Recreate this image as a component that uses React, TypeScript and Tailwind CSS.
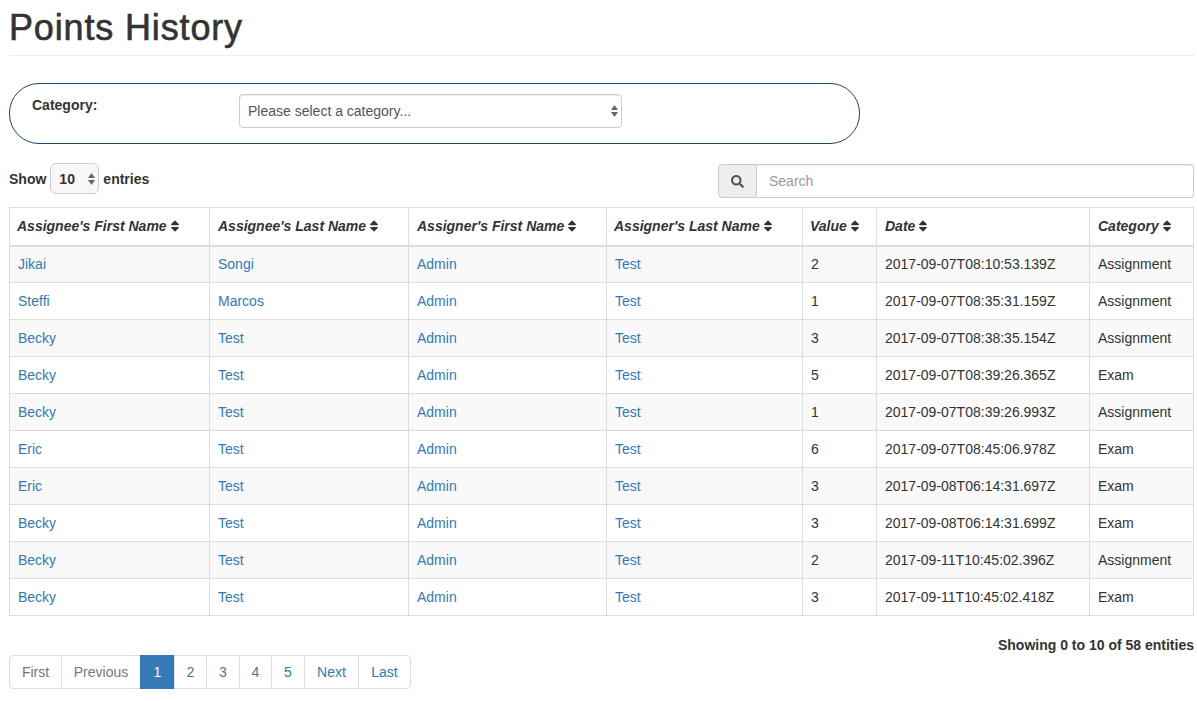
import { FaSearch, FaSort } from 'react-icons/fa'

const rows = [
  ['Jikai', 'Songi', '2', '2017-09-07T08:10:53.139Z', 'Assignment'],
  ['Steffi', 'Marcos', '1', '2017-09-07T08:35:31.159Z', 'Assignment'],
  ['Becky', 'Test', '3', '2017-09-07T08:38:35.154Z', 'Assignment'],
  ['Becky', 'Test', '5', '2017-09-07T08:39:26.365Z', 'Exam'],
  ['Becky', 'Test', '1', '2017-09-07T08:39:26.993Z', 'Assignment'],
  ['Eric', 'Test', '6', '2017-09-07T08:45:06.978Z', 'Exam'],
  ['Eric', 'Test', '3', '2017-09-08T06:14:31.697Z', 'Exam'],
  ['Becky', 'Test', '3', '2017-09-08T06:14:31.699Z', 'Exam'],
  ['Becky', 'Test', '2', '2017-09-11T10:45:02.396Z', 'Assignment'],
  ['Becky', 'Test', '3', '2017-09-11T10:45:02.418Z', 'Exam'],
]

const columns = [
  { label: "Assignee's First Name", width: 'w-[200px]', pad: 'pl-[7px]' },
  { label: "Assignee's Last Name", width: 'w-[199px]', pad: 'pl-2' },
  { label: "Assigner's First Name", width: 'w-[198px]', pad: 'pl-2' },
  { label: "Assigner's Last Name", width: 'w-[196px]', pad: 'pl-[7px]' },
  { label: 'Value', width: 'w-[74px]', pad: 'pl-[7px]' },
  { label: 'Date', width: 'w-[213px]', pad: 'pl-2' },
  { label: 'Category', width: 'w-[104px]', pad: 'pl-2' },
]

const pages = [
  { label: 'First', width: 'w-[53px]', text: 'text-[#777]' },
  { label: 'Previous', width: 'w-[80px]', text: 'text-[#777]' },
  { label: '1', width: 'w-[35px]', text: 'text-white', active: true },
  { label: '2', width: 'w-[33px]', text: 'text-[#337ab7]' },
  { label: '3', width: 'w-[34px]', text: 'text-[#337ab7]' },
  { label: '4', width: 'w-[33px]', text: 'text-[#337ab7]' },
  { label: '5', width: 'w-[34px]', text: 'text-[#337ab7]' },
  { label: 'Next', width: 'w-[55px]', text: 'text-[#337ab7]' },
  { label: 'Last', width: 'w-[53px]', text: 'text-[#337ab7]' },
]

function Arrows() {
  return (
    <svg width="7" height="12" viewBox="0 0 7 12" className="fill-[#666]">
      <path d="M3.5 0 7 5H0z" />
      <path d="M3.5 12 0 7h7z" />
    </svg>
  )
}

function Link({ children }: { children: string }) {
  return <a className="text-[#337ab7]">{children}</a>
}

export default function App() {
  return (
    <div className="w-[1197px] h-[701px] overflow-hidden bg-white pl-[9px] pr-[3px] font-['Liberation_Sans',Arial,sans-serif] text-sm text-[#333]">
      <h1 className="h-[56px] border-b border-[#eee] pt-2 text-4xl leading-[40px] font-normal tracking-[0.85px] [-webkit-text-stroke:0.6px_#333]">
        Points History
      </h1>

      {/* Category filter */}
      <div className="mt-[27px] flex h-[61px] w-[851px] items-start rounded-[30px] border border-[#1f4568] pl-[22px] pt-[10px]">
        <label className="w-[207px] pt-px font-bold leading-5">Category:</label>
        <div className="flex h-[34px] w-[383px] items-center justify-between rounded border border-[#ccc] pl-2 pr-[3px] text-[#555] shadow-[inset_0_1px_1px_rgba(0,0,0,0.075)]">
          <span>Please select a category...</span>
          <Arrows />
        </div>
      </div>

      <div className="mt-[19px] flex items-start justify-between">
        <div className="flex h-[31px] items-center gap-1 font-bold">
          <span>Show</span>
          <div className="flex h-[31px] w-[49px] items-center justify-between rounded-md border border-[#ccc] bg-[#f8f8f8] pl-[8px] pr-[3px]">
            <span>10</span>
            <Arrows />
          </div>
          <span>entries</span>
        </div>
        <div className="mt-px flex h-[34px] w-[476px]">
          <span className="flex w-[39px] items-center justify-center rounded-l border border-[#ccc] bg-[#eee] text-[#555]">
            <FaSearch size={13} />
          </span>
          <input
            placeholder="Search"
            className="min-w-0 flex-1 rounded-r border border-l-0 border-[#ccc] px-3 shadow-[inset_0_1px_1px_rgba(0,0,0,0.075)] outline-none placeholder:text-[#999]"
          />
        </div>
      </div>

      <table className="mt-[9px] w-[1184px] table-fixed border-collapse">
        <thead>
          <tr className="h-[38px]">
            {columns.map((col) => (
              <th
                key={col.label}
                className={`${col.width} ${col.pad} border border-b-2 border-[#ddd] pr-2 text-left font-bold italic text-[#333]`}
              >
                <span className="inline-flex items-center gap-px whitespace-nowrap">
                  {col.label}
                  <FaSort size={14} />
                </span>
              </th>
            ))}
          </tr>
        </thead>
        <tbody>
          {rows.map((row, i) => (
            <tr key={i} className={`h-[37px] ${i % 2 === 0 ? 'bg-[#f9f9f9]' : 'bg-white'}`}>
              <td className="border border-[#ddd] px-2"><Link>{row[0]}</Link></td>
              <td className="border border-[#ddd] px-2"><Link>{row[1]}</Link></td>
              <td className="border border-[#ddd] px-2"><Link>Admin</Link></td>
              <td className="border border-[#ddd] px-2"><Link>Test</Link></td>
              <td className="border border-[#ddd] px-2">{row[2]}</td>
              <td className="border border-[#ddd] px-2">{row[3]}</td>
              <td className="border border-[#ddd] px-2">{row[4]}</td>
            </tr>
          ))}
        </tbody>
      </table>

      <p className="mt-[19px] w-[1185px] text-right font-bold leading-5">Showing 0 to 10 of 58 entities</p>

      <div className="flex">
        {pages.map((page) => (
          <a
            key={page.label}
            className={`${page.width} ${page.text} -ml-px flex h-[34px] items-center justify-center border first:ml-0 first:rounded-l last:rounded-r ${
              page.active ? 'border-[#337ab7] bg-[#337ab7]' : 'border-[#ddd] bg-white'
            }`}
          >
            {page.label}
          </a>
        ))}
      </div>
    </div>
  )
}
